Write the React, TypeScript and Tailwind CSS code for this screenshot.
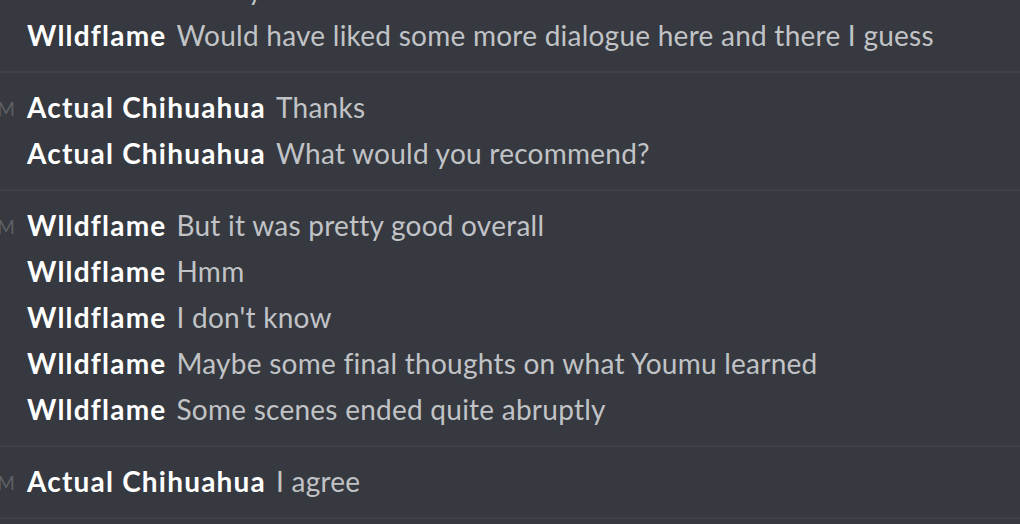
import React from 'react';

type Line = { name: string; text: string };
type Group = { time: string; lines: Line[] };

const W = 'Wlldflame';
const C = 'Actual Chihuahua';

const groups: Group[] = [
  {
    time: '10:41 PM',
    lines: [
      { name: W, text: 'Mostly liked the cutscenes' },
      { name: W, text: 'Would have liked some more dialogue here and there I guess' },
    ],
  },
  {
    time: '10:42 PM',
    lines: [
      { name: C, text: 'Thanks' },
      { name: C, text: 'What would you recommend?' },
    ],
  },
  {
    time: '10:43 PM',
    lines: [
      { name: W, text: 'But it was pretty good overall' },
      { name: W, text: 'Hmm' },
      { name: W, text: "I don't know" },
      { name: W, text: 'Maybe some final thoughts on what Youmu learned' },
      { name: W, text: 'Some scenes ended quite abruptly' },
    ],
  },
  {
    time: '10:44 PM',
    lines: [{ name: C, text: 'I agree' }],
  },
];

function Row({ line, time }: { line: Line; time?: string }) {
  return (
    <div className="flex h-[46px] items-center whitespace-nowrap">
      {/* timestamp column, clipped on the left like the reference */}
      <div className="flex w-[15px] shrink-0 justify-end overflow-hidden pt-[2px]">
        {time && (
          <span className="shrink-0 text-[19px] leading-none text-[#5d6065]">{time}</span>
        )}
      </div>
      <span className="ml-[12px] text-[28px] font-bold tracking-[1.2px] text-white">
        {line.name}
      </span>
      <span className="ml-[10px] text-[28px] tracking-[0.25px] text-[#c1c3c6]">{line.text}</span>
    </div>
  );
}

export default function App() {
  return (
    <div
      className="h-[524px] w-[1020px] overflow-hidden bg-[#36393f]"
      style={{ fontFamily: 'Lato, "Open Sans", sans-serif' }}
    >
      <div className="-mt-[45px]">
        {groups.map((g, gi) => (
          <div key={gi} className="border-b-2 border-[#3e4147] pt-[11px] pb-[13px]">
            {g.lines.map((l, li) => (
              <Row key={li} line={l} time={li === 0 ? g.time : undefined} />
            ))}
          </div>
        ))}
      </div>
    </div>
  );
}
